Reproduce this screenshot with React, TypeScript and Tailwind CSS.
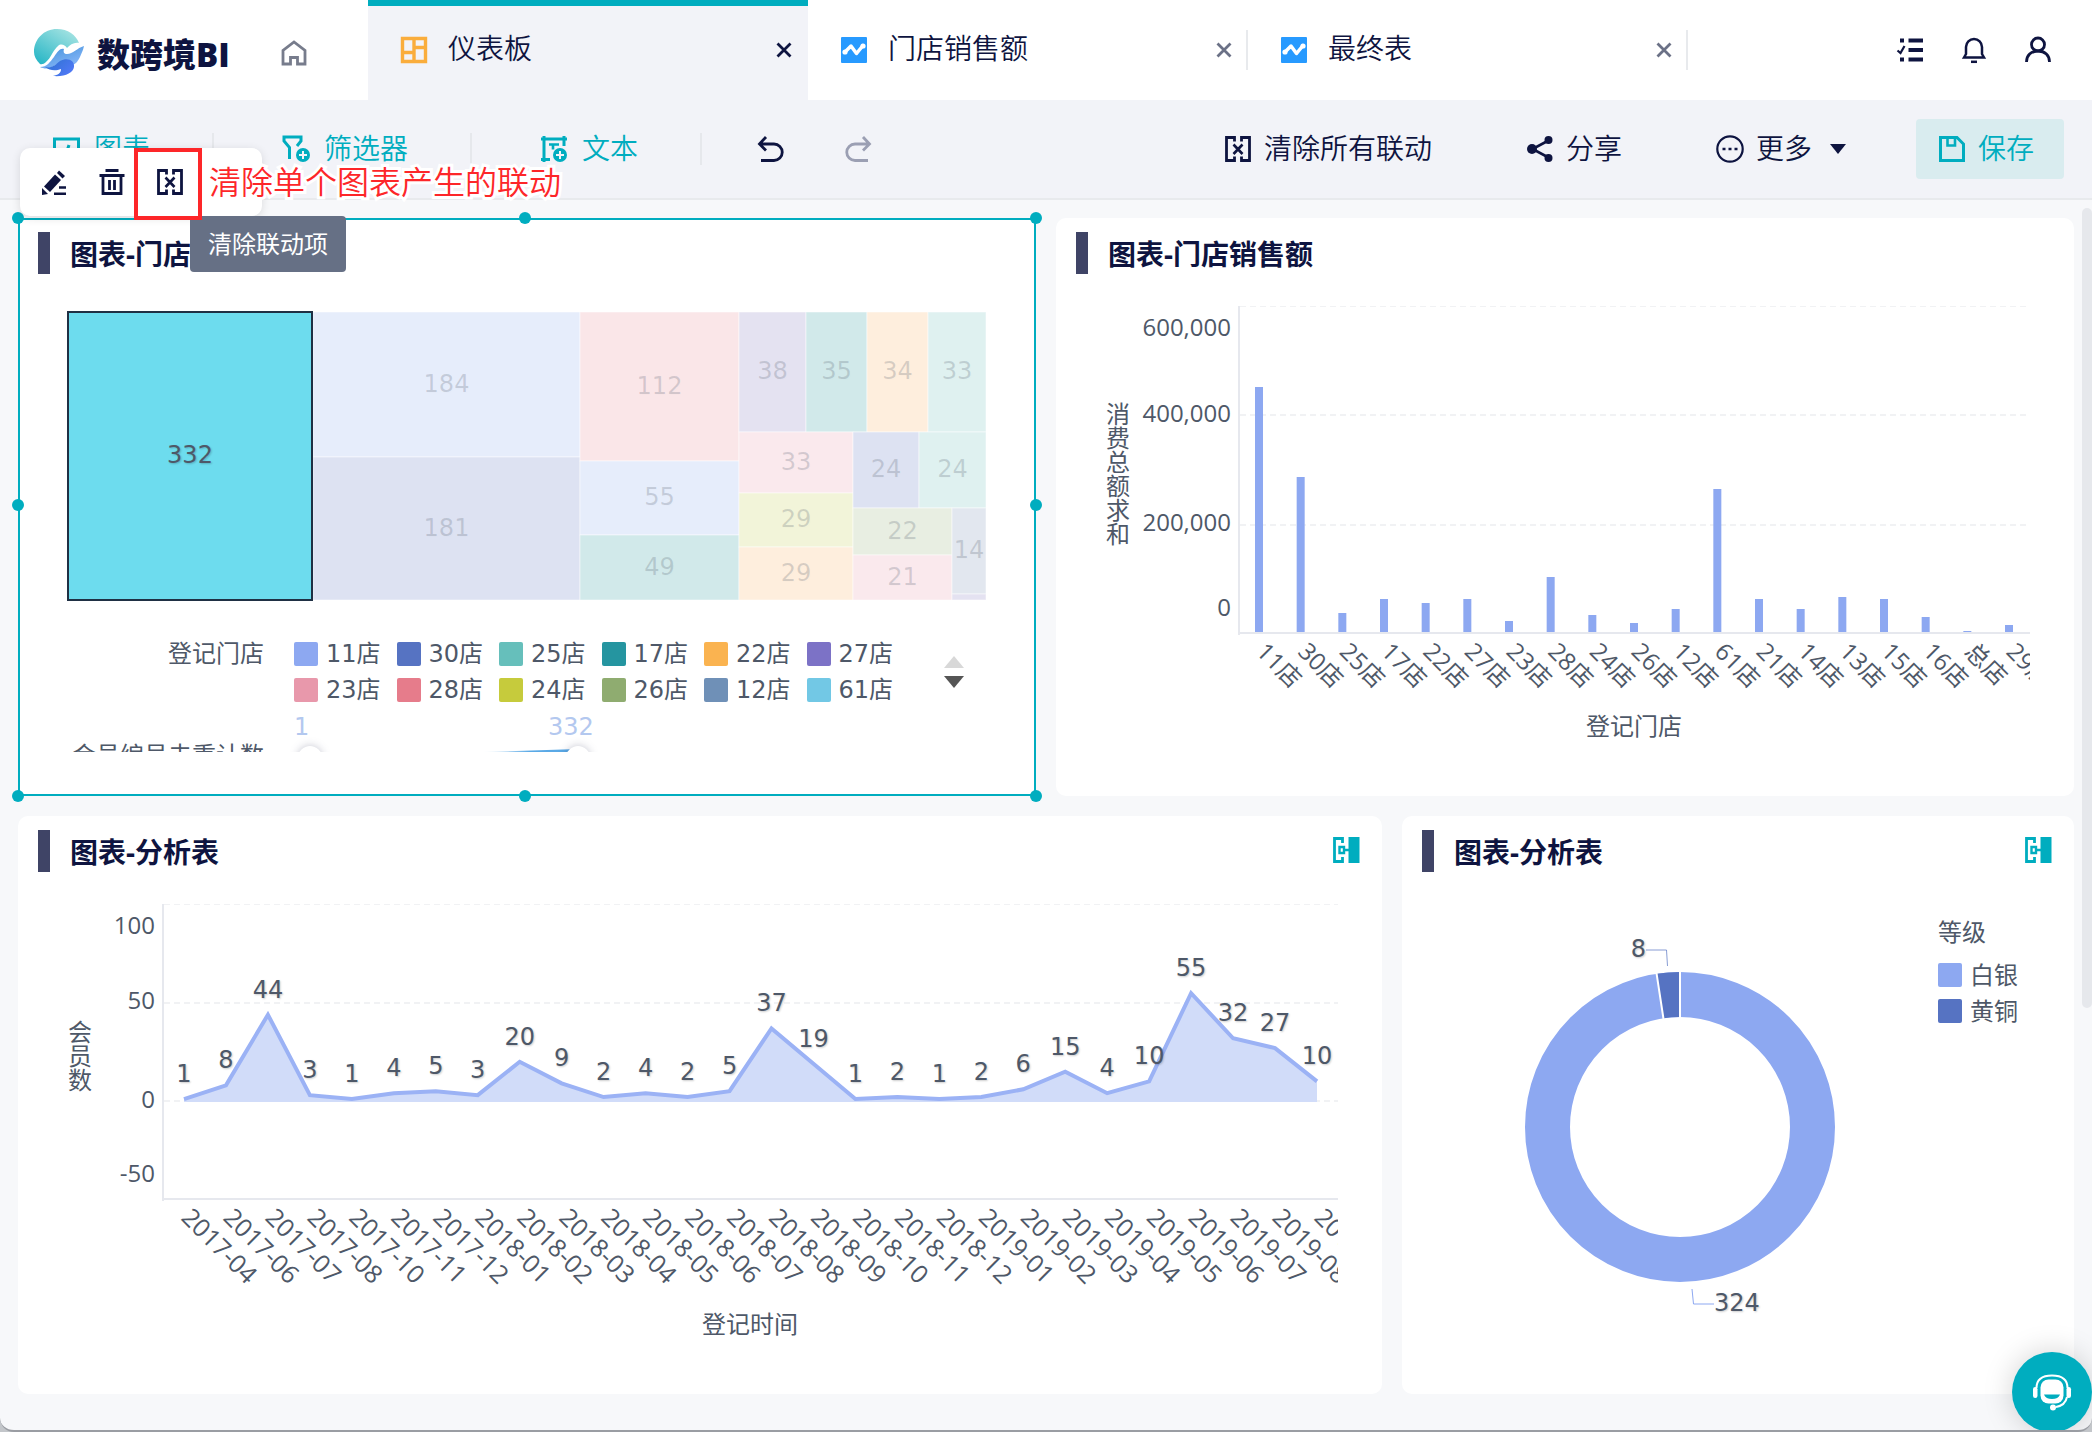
import React from 'react';

const NAVY = '#0e1440';
const TEAL = '#00adbf';
const INK = '#4e5868';

/* ---------- Icons ---------- */

interface IconProps {
  className?: string;
}

const Icon: React.FC<IconProps & { children: React.ReactNode }> = ({ className = 'size-7', children }) => (
  <svg className={`shrink-0 ${className}`} viewBox="0 0 28 28" fill="none" stroke="currentColor" strokeWidth={3} aria-hidden="true">
    {children}
  </svg>
);

const HomeIcon = () => (
  <Icon>
    <path d="M3 25V11.500L14 3l11 8.500V25h-7.500v-6.500h-7V25z" strokeWidth={2.800} />
  </Icon>
);

const DashboardIcon = () => (
  <Icon className="size-7 text-[#faad3c]">
    <path d="M2.500 2.500h23v23h-23zM14 2.500v23M2.500 16.500H14M14 11.500h11.500" strokeWidth={3.400} />
  </Icon>
);

const DatasetIcon = () => (
  <Icon className="size-7">
    <rect x="1" y="1" width="26" height="26" rx="1" fill="#279aff" stroke="none" />
    <path d="M5 16l6-6 5.500 7.500 6.500-8" stroke="#fff" strokeWidth={3.500} strokeLinecap="round" strokeLinejoin="round" />
    <circle cx="5" cy="16" r="2.600" fill="#fff" stroke="none" />
    <circle cx="23" cy="10" r="2.600" fill="#fff" stroke="none" />
  </Icon>
);

const CloseIcon = () => (
  <svg className="size-4" viewBox="0 0 16 16" fill="none" stroke="currentColor" strokeWidth={2.800} aria-hidden="true">
    <path d="M1.500 1.500l13 13M14.500 1.500l-13 13" />
  </svg>
);

const TaskIcon = () => (
  <Icon>
    <path d="M12.500 4.500H27M12.500 14H27M12.500 23.500H27M4 4.500h4M4 23.500h4" strokeWidth={3.800} />
    <path d="M1.500 14.500l3 2.500 4-7" strokeWidth={2.200} />
  </Icon>
);

const BellIcon = () => (
  <Icon>
    <path d="M4 21.500l2-3.500v-7a8 8 0 0 1 16 0v7l2 3.500z" strokeWidth={2.500} />
    <path d="M11 25.800h6" strokeWidth={2.500} />
  </Icon>
);

const UserIcon = () => (
  <Icon>
    <circle cx="14" cy="8.500" r="6.500" strokeWidth={2.800} />
    <path d="M2.500 26c0-6.500 4.500-11 11.500-11s11.500 4.500 11.500 11" strokeWidth={2.800} />
  </Icon>
);

const ChartIcon = () => (
  <Icon>
    <path d="M2.500 4h24v20h-24zM9 19v-6M14 19l3-9M21 19v-6" />
  </Icon>
);

const FilterIcon = () => (
  <Icon>
    <path d="M7.500 24V12.500L2 6V2h17v4l-4 5" />
    <circle cx="21" cy="20" r="7" fill="currentColor" stroke="none" />
    <path d="M21 16v8M17 20h8" stroke="#f2f3f8" strokeWidth={2} />
  </Icon>
);

const TextIcon = () => (
  <Icon>
    <path d="M4 1v26M24 1v10M1 4h26M1 24.500h9" strokeWidth={3} />
    <path d="M9 9.500h10M13 9.500v5" strokeWidth={2.600} />
    <circle cx="20" cy="20" r="7" fill="currentColor" stroke="none" />
    <path d="M20 16v8M16 20h8" stroke="#f2f3f8" strokeWidth={2} />
  </Icon>
);

const UndoIcon = () => (
  <Icon>
    <path d="M10 2L3.500 9l6.500 6.500M4 9h14a8 8 0 0 1 0 16.500H5" strokeWidth={2.800} />
  </Icon>
);

const RedoIcon = () => (
  <Icon>
    <path d="M18 2l6.500 7-6.500 6.500M24 9H10a8 8 0 0 0 0 16.500h13" strokeWidth={2.800} />
  </Icon>
);

const UnlinkIcon = () => (
  <Icon>
    <path d="M10.500 6.500V2.500h-8v23h8v-4M17.500 6.500V2.500h8v23h-8v-4" strokeWidth={2.800} />
    <path d="M9.500 9.500l9 9.500M18.500 9.500l-9 9.500" strokeWidth={2.600} />
  </Icon>
);

const ShareIcon = () => (
  <Icon>
    <path d="M22.500 5.500L6.500 14l16 8.500" strokeWidth={2.600} />
    <circle cx="6" cy="14" r="5" fill="currentColor" stroke="none" />
    <circle cx="22.500" cy="5" r="4" fill="currentColor" stroke="none" />
    <circle cx="22.500" cy="23" r="4" fill="currentColor" stroke="none" />
  </Icon>
);

const MoreIcon = () => (
  <Icon>
    <circle cx="14" cy="14" r="12.700" strokeWidth={2.200} />
    <path d="M6.500 14h3M12.500 14h3M18.500 14h3" strokeWidth={2.600} />
  </Icon>
);

const SaveIcon = () => (
  <Icon>
    <path d="M2.500 2.500H19l6.500 6.500v16.500h-23z" />
    <path d="M9.500 3v7.500h7.500V3" strokeWidth={2.600} />
  </Icon>
);

const EditIcon = () => (
  <Icon>
    <path d="M4 18.500L15 6.500l6 5.500-11 12z" fill="currentColor" stroke="none" />
    <path d="M17 5l2-2.500 6 5.500-2.500 2.500z" fill="currentColor" stroke="none" />
    <path d="M2 27v-7l6 6z" fill="currentColor" stroke="none" />
    <path d="M14 25.800h12M19 19.500h7" strokeWidth={2.400} />
  </Icon>
);

const TrashIcon = () => (
  <Icon>
    <path d="M7.500 2.500h13M1.500 7.500h25" strokeWidth={2.800} />
    <path d="M5 8v17.500h18V8M11.500 12v10M16.500 12v10" strokeWidth={2.800} />
  </Icon>
);

const LinkedIcon = () => (
  <Icon>
    <path d="M10.500 7V2.500h-8v23h8V21" strokeWidth={2.800} />
    <path d="M7.500 11h4.500v6H7.500zM12.500 14H18" strokeWidth={2.400} />
    <rect x="16.500" y="1" width="11" height="26" fill="currentColor" stroke="none" />
  </Icon>
);

const Logo = () => (
  <svg className="h-[50px] w-[52px] shrink-0" viewBox="0 0 52 50" aria-hidden="true">
    <defs>
      <linearGradient id="logo-sky" x1="0" y1="1" x2="0.800" y2="0">
        <stop offset="0" stopColor="#1fb3c4" />
        <stop offset="1" stopColor="#a5e3e2" />
      </linearGradient>
      <linearGradient id="logo-wave" x1="0" y1="0" x2="0.700" y2="1">
        <stop offset="0" stopColor="#3d8fd8" />
        <stop offset="1" stopColor="#8ab8fa" />
      </linearGradient>
      <linearGradient id="logo-deep" x1="0" y1="0" x2="1" y2="0.600">
        <stop offset="0" stopColor="#2a72cd" />
        <stop offset="1" stopColor="#4f78f5" />
      </linearGradient>
    </defs>
    {/* sky disc with a white crest cut along its lower edge */}
    <path d="M7 36C3 32 1 28 1 24 1 11 11 1 24 1c11 0 19 6 22 14-5-1-9 2-12 5-2-3-6-5-9-2-5 4-7 12-12 16-2 2-4 2.500-6 2z" fill="url(#logo-sky)" />
    <path d="M7 39c7 0 10-5 14-10 4-6 6-9 10-8-1 3 0 5 3 5 6 0 10-6 17-8-1 5-3 8-4 11-2 4-4 7-8 8-4-4-8-6-12-3-6 4-12 9-20 5z" fill="url(#logo-wave)" />
    <path d="M12 39c7 2 11-3 15-6 7-4 15-1 14 6-1 6-9 10-21 9 5-1 8-3 8-7-5 2-11 2-16-2z" fill="url(#logo-deep)" />
  </svg>
);

/* ---------- Header ---------- */

interface TabItem {
  title: string;
  kind: 'dashboard' | 'dataset';
  active?: boolean;
}

const TABS: TabItem[] = [
  { title: '仪表板', kind: 'dashboard', active: true },
  { title: '门店销售额', kind: 'dataset' },
  { title: '最终表', kind: 'dataset' },
];

const Tab: React.FC<{ tab: TabItem }> = ({ tab }) => (
  <div
    className={`flex w-[440px] items-center border-t-[6px] pb-1.5 pl-8 ${
      tab.active ? 'border-[#00adbf] bg-[#f2f3f8] pr-4' : 'border-transparent'
    }`}
  >
    <button className="flex flex-1 items-center gap-5 text-left">
      {tab.kind === 'dashboard' ? <DashboardIcon /> : <DatasetIcon />}
      <span className="pb-1">{tab.title}</span>
    </button>
    <button aria-label={`关闭${tab.title}`} className={tab.active ? '' : 'mr-3.5 text-[#6b7186]'}>
      <CloseIcon />
    </button>
    {!tab.active && <span className="h-10 w-0.5 bg-[#e8eaed]" />}
  </div>
);

const Header = () => (
  <header className="flex h-[100px] bg-white">
    <div className="flex w-[368px] items-center pt-1.5 pl-[33px]">
      <Logo />
      <span className="ml-3 pt-1 text-[33px] leading-10 font-black">数跨境BI</span>
      <a href="#home" aria-label="首页" className="ml-[50px] text-[#777c8c]">
        <HomeIcon />
      </a>
    </div>
    {TABS.map((tab) => (
      <Tab key={tab.title} tab={tab} />
    ))}
    <div className="ml-auto flex items-center gap-9 pr-10">
      <button aria-label="任务"><TaskIcon /></button>
      <button aria-label="通知"><BellIcon /></button>
      <button aria-label="用户"><UserIcon /></button>
    </div>
  </header>
);

/* ---------- Toolbar ---------- */

const ToolDivider = () => <span className="mr-[68px] ml-[62px] h-8 w-0.5 bg-[#e6e8ec]" />;

const ToolButton: React.FC<{ icon: React.ReactNode; label: string; className?: string }> = ({ icon, label, className = 'gap-3' }) => (
  <button className={`flex items-center ${className}`}>
    {icon}
    <span className="pb-0.5">{label}</span>
  </button>
);

const Toolbar = () => (
  <div className="flex h-[100px] items-center border-b-2 border-[#e8eaed] bg-[#f2f3f8] pr-7 pl-[52px]">
    <ToolButton icon={<ChartIcon />} label="图表" className="gap-3.5 text-[#00adbf]" />
    <ToolDivider />
    <ToolButton icon={<FilterIcon />} label="筛选器" className="gap-3.5 text-[#00adbf]" />
    <ToolDivider />
    <ToolButton icon={<TextIcon />} label="文本" className="gap-3.5 text-[#00adbf]" />
    <ToolDivider />
    <div className="-ml-3.5 flex gap-[61px]">
      <button aria-label="撤销"><UndoIcon /></button>
      <button aria-label="重做" className="text-[#9b9fb3]" disabled><RedoIcon /></button>
    </div>

    <div className="ml-auto flex items-center gap-[94px]">
      <ToolButton icon={<UnlinkIcon />} label="清除所有联动" />
      <ToolButton icon={<ShareIcon />} label="分享" />
      <button className="flex items-center gap-3">
        <MoreIcon />
        <span className="pb-0.5">更多</span>
        <svg className="ml-1.5 h-2.5 w-4" viewBox="0 0 16 10" fill="currentColor" aria-hidden="true">
          <path d="M0 0h16L8 10z" />
        </svg>
      </button>
    </div>
    <ToolButton
      icon={<SaveIcon />}
      label="保存"
      className="ml-[70px] h-[60px] w-[148px] gap-3 rounded bg-[#d9ecef] pl-[22px] text-[#00adbf]"
    />
  </div>
);

/* ---------- Cards ---------- */

interface CardProps {
  title: string;
  linked?: boolean;
  className?: string;
  children: React.ReactNode;
}

const Card: React.FC<CardProps> = ({ title, linked, className = '', children }) => (
  <section className={`flex min-h-[578px] flex-col bg-white font-normal ${className}`}>
    <div className="flex h-14 items-center pt-3.5 pr-[22px] pl-5">
      <span className="h-[42px] w-3 bg-[#3f4466]" />
      <h2 className="ml-5 pt-0.5 text-[28px] leading-10 font-bold">{title}</h2>
      {linked && (
        <button aria-label="联动" className="ml-auto pb-0.5 text-[#00adbf]">
          <LinkedIcon />
        </button>
      )}
    </div>
    {children}
  </section>
);

const DIGITS = "font-['DejaVu_Sans','Noto_Sans_CJK_SC',sans-serif] text-[24px]";
const LABEL = "font-['Open_Sans','Noto_Sans_CJK_SC',sans-serif] text-[24px]";

/* x, y, width, height, value, fill */
type Tile = [number, number, number, number, string, string];

const TILES: Tile[] = [
  [247, 2, 267, 145, '184', '#e6edfb'],
  [247, 147, 267, 143, '181', '#dde2f2'],
  [514, 2, 159, 149, '112', '#fae6e8'],
  [514, 151, 159, 74, '55', '#e6edfb'],
  [514, 225, 159, 65, '49', '#d1e9ea'],
  [673, 2, 67, 120, '38', '#e4e2f1'],
  [740, 2, 61, 120, '35', '#d1e9ea'],
  [801, 2, 61, 120, '34', '#feeedd'],
  [862, 2, 58, 120, '33', '#dff1f0'],
  [673, 122, 114, 61, '33', '#fae9ed'],
  [673, 183, 114, 54, '29', '#f2f4d9'],
  [673, 237, 114, 53, '29', '#feeedd'],
  [787, 122, 66, 76, '24', '#dde2f2'],
  [853, 122, 67, 76, '24', '#dff1f0'],
  [787, 198, 99, 47, '22', '#e8eee2'],
  [787, 245, 99, 45, '21', '#fae9ed'],
  [886, 198, 34, 86, '14', '#e2e7ef'],
  [886, 284, 34, 6, '', '#e4e2f1'],
];

const Treemap = () => (
  <svg className={`mt-9 w-full ${DIGITS}`} viewBox="0 0 922 292" textAnchor="middle" role="img" aria-label="门店矩形树图">
    {TILES.map(([x, y, w, h, value, fill], idx) => (
      <g key={idx}>
        <rect x={x} y={y} width={w} height={h} fill={fill} stroke="#fff" strokeOpacity={0.5} />
        {value && (
          <text className="[text-shadow:1px_1px_2px_#0000000f]" x={x + w / 2} y={y + h / 2 + 7} fill={INK} fillOpacity={0.22}>{value}</text>
        )}
      </g>
    ))}
    <rect x="2" y="2" width="244" height="288" fill="#6ddcee" stroke="#1f3044" strokeWidth={2} />
    <text className="[text-shadow:1px_1px_2px_#00000033]" x="124" y="153" fill={INK}>332</text>
  </svg>
);

const STORES = [
  { name: '11店', color: 'bg-[#8da8f1]' },
  { name: '30店', color: 'bg-[#5673c2]' },
  { name: '25店', color: 'bg-[#66bfbb]' },
  { name: '17店', color: 'bg-[#2595a0]' },
  { name: '22店', color: 'bg-[#fab350]' },
  { name: '27店', color: 'bg-[#7c72c6]' },
  { name: '23店', color: 'bg-[#e898ab]' },
  { name: '28店', color: 'bg-[#e67c8b]' },
  { name: '24店', color: 'bg-[#c6cb3c]' },
  { name: '26店', color: 'bg-[#8fac70]' },
  { name: '12店', color: 'bg-[#6f90b7]' },
  { name: '61店', color: 'bg-[#72c8e5]' },
];

const TreemapLegend = () => (
  <div className={`mt-[34px] h-[116px] overflow-hidden text-[#4e5868] ${DIGITS}`}>
    <div className="flex">
      <span className="w-[198px] text-right leading-9">登记门店</span>
      <ul className="ml-[30px] grid w-[615px] grid-cols-6">
        {STORES.map((store) => (
          <li key={store.name} className="flex h-9 items-center gap-2">
            <span className={`size-6 rounded-xs ${store.color}`} />
            {store.name}
          </li>
        ))}
      </ul>
      <div className="ml-[35px] flex flex-col justify-center gap-2">
        <button aria-label="上一页" className="text-[#d8d8d8]">
          <svg className="h-3 w-5" viewBox="0 0 20 12" fill="currentColor"><path d="M0 12L10 0l10 12z" /></svg>
        </button>
        <button aria-label="下一页" className="text-[#555]">
          <svg className="h-3 w-5" viewBox="0 0 20 12" fill="currentColor"><path d="M0 0h20L10 12z" /></svg>
        </button>
      </div>
    </div>
    <div className="flex h-9 items-center pt-0.5 pl-7 text-[#b3c8ef]">
      <span className="ml-[200px] w-[254px]">1</span>
      <span>332</span>
    </div>
    <div className="flex">
      <span className="w-[198px] shrink-0 text-right leading-6">会员编号去重计数</span>
      <svg className="ml-7 h-6 w-[310px] overflow-visible" viewBox="0 0 310 24" aria-hidden="true">
        <defs>
          <linearGradient id="range-track">
            <stop offset="0" stopColor="#5aa9e6" stopOpacity="0" />
            <stop offset="0.500" stopColor="#5aa9e6" />
          </linearGradient>
        </defs>
        <path d="M190 8L286 5v12z" fill="url(#range-track)" />
        <circle className="drop-shadow-[0_0_4px_#0e144040]" cx="18" cy="14" r="12" fill="#fff" />
        <circle className="drop-shadow-[0_0_4px_#0e144040]" cx="286" cy="14" r="12" fill="#fff" />
      </svg>
    </div>
  </div>
);

/* Handles sit on the corners and edge middles of the selected card */
const HANDLES = [
  '-left-2 -top-2',
  'left-1/2 -ml-2 -top-2',
  '-right-2 -top-2',
  '-left-2 top-1/2 -mt-2',
  '-right-2 top-1/2 -mt-2',
  '-left-2 -bottom-2',
  'left-1/2 -ml-2 -bottom-2',
  '-right-2 -bottom-2',
];

const SelectionOverlay = () => (
  <>
    <div className="pointer-events-none absolute inset-0 border-2 border-[#00adbf]">
      {HANDLES.map((pos) => (
        <span key={pos} className={`absolute size-3 rounded-full bg-[#00adbf] ${pos}`} />
      ))}
    </div>
    <div className="absolute -top-[70px] left-0.5 z-10 flex h-[68px] w-[242px] items-center rounded-[10px] bg-white pl-5 shadow-[0_2px_10px_#0000001f]">
      <button aria-label="编辑"><EditIcon /></button>
      <button aria-label="删除" className="ml-[30px]"><TrashIcon /></button>
      <button aria-label="清除联动项" className="ml-[30px]"><UnlinkIcon /></button>
    </div>
    <div className="absolute -top-[2px] left-[172px] z-20 flex h-14 items-center rounded bg-[#667085] px-[18px] text-[24px] whitespace-nowrap text-white">
      清除联动项
    </div>
    <div className="absolute -top-[70px] left-[116px] z-30 h-[72px] w-[68px] border-4 border-[#fd2629]" />
    <p className="absolute -top-[60px] left-[191px] z-20 text-[32px] leading-[48px] font-[350] whitespace-nowrap text-[#fd2629] [paint-order:stroke_fill] [-webkit-text-stroke:6px_#fff]">
      清除单个图表产生的联动
    </p>
  </>
);

const VerticalTitle: React.FC<{ text: string; x: number; y: number }> = ({ text, x, y }) => (
  <text className="[writing-mode:vertical-rl]" x={x} y={y}>{text}</text>
);

/* label, top of the bar */
const BARS: [string, number][] = [
  ['11店', 113], ['30店', 203], ['25店', 339], ['17店', 325], ['22店', 329],
  ['27店', 325], ['23店', 347], ['28店', 303], ['24店', 341], ['26店', 349],
  ['12店', 335], ['61店', 215], ['21店', 325], ['14店', 335], ['13店', 323],
  ['15店', 325], ['16店', 343], ['总店', 357], ['29店', 351],
];

const BarChart = () => {
  const step = 750 / 18;

  return (
    <svg className={`w-full ${LABEL}`} viewBox="0 0 1018 522" fill={INK} role="img" aria-label="门店销售额柱状图">
      <clipPath id="bar-clip"><rect width="974" height="522" /></clipPath>
      <g stroke="#f1f2f4" strokeWidth={2} strokeDasharray="6 4">
        <path d="M184 32.500H974" strokeWidth={1} />
        <path d="M184 141H974M184 251H974" />
      </g>
      <path d="M183 32V361M182 359H974" stroke="#e6e8ee" strokeWidth={2} />
      <g textAnchor="end">
        <text x="175" y="62">600,000</text>
        <text x="175" y="148">400,000</text>
        <text x="175" y="257">200,000</text>
        <text x="175" y="342">0</text>
      </g>
      <VerticalTitle text="消费总额求和" x={61} y={128} />
      <g clipPath="url(#bar-clip)">
        {BARS.map(([label, top], idx) => {
          const x = 199 + idx * step;
          return (
            <g key={label}>
              <rect x={x} y={top} width={8} height={358 - top} fill="#8da8f1" />
              <text transform={`translate(${x} 379) rotate(45)`}>{label}</text>
            </g>
          );
        })}
      </g>
      <text x="578" y="461" textAnchor="middle">登记门店</text>
    </svg>
  );
};

const MONTHS: [string, number][] = [
  ['2017-04', 1], ['2017-06', 8], ['2017-07', 44], ['2017-08', 3], ['2017-10', 1],
  ['2017-11', 4], ['2017-12', 5], ['2018-01', 3], ['2018-02', 20], ['2018-03', 9],
  ['2018-04', 2], ['2018-05', 4], ['2018-06', 2], ['2018-07', 5], ['2018-08', 37],
  ['2018-09', 19], ['2018-10', 1], ['2018-11', 2], ['2018-12', 1], ['2019-01', 2],
  ['2019-02', 6], ['2019-03', 15], ['2019-04', 4], ['2019-05', 10], ['2019-06', 55],
  ['2019-07', 32], ['2019-08', 27], ['2019-09', 10],
];

const AreaChart = () => {
  const step = 1133 / 27;
  const points = MONTHS.map(([month, value], idx) => ({ month, value, x: 166 + idx * step, y: 229 - value * 1.96 }));
  const line = points.map((p) => `${p.x},${p.y}`).join(' ');

  return (
    <svg className={`w-full ${LABEL}`} viewBox="0 0 1364 522" fill={INK} role="img" aria-label="会员数面积图">
      <clipPath id="area-clip"><rect width="1320" height="522" /></clipPath>
      <g stroke="#f1f2f4" strokeWidth={2} strokeDasharray="6 4">
        <path d="M146 32.500H1320" strokeWidth={1} />
        <path d="M146 131H1320M146 229H1320" />
      </g>
      <path d="M145 32V329M144 327H1320" stroke="#e6e8ee" strokeWidth={2} />
      <g textAnchor="end">
        <text x="137" y="62">100</text>
        <text x="137" y="137">50</text>
        <text x="137" y="236">0</text>
        <text x="137" y="310">-50</text>
      </g>
      <VerticalTitle text="会员数" x={61} y={148} />
      <polygon points={`166,230 ${line} 1299,230`} fill="#d1dcf9" />
      <polyline points={line} fill="none" stroke="#9bb2f5" strokeWidth={4} />
      <g className={`[text-shadow:1px_1px_2px_#00000033] ${DIGITS}`} textAnchor="middle">
        {points.map((p) => (
          <text key={p.month} x={p.x} y={p.y - 17}>{p.value}</text>
        ))}
      </g>
      <g className="text-[25px]" clipPath="url(#area-clip)">
        {points.map((p) => (
          <text key={p.month} transform={`translate(${p.x - 4} 347) rotate(45)`}>{p.month}</text>
        ))}
      </g>
      <text x="732" y="461" textAnchor="middle">登记时间</text>
    </svg>
  );
};

const DonutChart = () => {
  const angle = (8 / 332) * Math.PI * 2;
  const at = (radius: number) => `${278 - radius * Math.sin(angle)} ${255 - radius * Math.cos(angle)}`;

  return (
    <svg className={`min-w-0 flex-1 ${DIGITS}`} viewBox="0 0 536 522" fill={INK} role="img" aria-label="等级环形图">
      <circle cx="278" cy="255" r="132.500" fill="none" stroke="#8da8f1" strokeWidth={45} />
      <path
        d={`M278 100A155 155 0 0 0 ${at(155)}L${at(110)}A110 110 0 0 1 278 145z`}
        fill="#5673c2"
      />
      <path d={`M278 98V147M${at(157)}L${at(108)}`} stroke="#fff" strokeWidth={2} />
      <path d="M265.500 94L264.500 78H244" fill="none" stroke="#5673c2" strokeOpacity={0.700} />
      <path d="M290 417L291.500 432H312" fill="none" stroke="#8da8f1" />
      <g className="[text-shadow:1px_1px_2px_#00000033]">
        <text x="244" y="85" textAnchor="end">8</text>
        <text x="312" y="439">324</text>
      </g>
    </svg>
  );
};

const DonutLegend = () => (
  <div className={`w-[136px] pt-[42px] leading-9 text-[#4e5868] ${LABEL}`}>
    <p className="mb-[7px]">等级</p>
    <ul>
      <li className="flex items-center gap-2"><span className="size-6 rounded-xs bg-[#8da8f1]" />白银</li>
      <li className="flex items-center gap-2"><span className="size-6 rounded-xs bg-[#5673c2]" />黄铜</li>
    </ul>
  </div>
);

const ServiceButton = () => (
  <button
    aria-label="在线客服"
    className="absolute right-0 -bottom-0.5 z-40 flex size-20 items-center justify-center rounded-full bg-[#00adbf] text-white shadow-[0_0_30px_#0000002e]"
  >
    <svg className="size-10" viewBox="0 0 40 40" fill="none" stroke="currentColor" aria-hidden="true">
      <path d="M4.500 16C4.500 8 10 3.500 20 3.500S35.500 8 35.500 16M35 25c-1 5-5 9-11 10" strokeWidth={2} />
      <rect x="8.500" y="7.500" width="23" height="24" rx="8" fill="currentColor" stroke="none" />
      <path d="M12 22.500h16c-1 3-4 4.500-8 4.500s-7-1.500-8-4.500z" fill={TEAL} stroke="none" />
      <rect x="1" y="15" width="4.500" height="11" rx="2.200" fill="currentColor" stroke="none" />
      <rect x="34.500" y="15" width="4.500" height="11" rx="2.200" fill="currentColor" stroke="none" />
      <circle cx="21" cy="35.500" r="3" fill="currentColor" stroke="none" />
    </svg>
  </button>
);

export default function App() {
  return (
    <div className="min-h-screen bg-[#c3c6ca] font-['Open_Sans','Noto_Sans_CJK_SC',sans-serif]">
      <div
        className="relative flex min-h-screen flex-col overflow-hidden rounded-b-[14px] border-b-2 border-[#9a9da3] bg-[#f7f8fa] text-[28px] leading-10 font-[350]"
        style={{ color: NAVY }}
      >
        <Header />
        <Toolbar />

        <main className="relative grid flex-1 grid-cols-6 content-start gap-5 px-[18px] pt-[18px] pb-9">
          <Card title="图表-门店销售额" className="relative col-span-3">
            <div className="px-12">
              <Treemap />
              <TreemapLegend />
            </div>
            <SelectionOverlay />
          </Card>
          <Card title="图表-门店销售额" className="col-span-3 rounded-[10px]">
            <BarChart />
          </Card>
          <Card title="图表-分析表" linked className="col-span-4 rounded-[10px]">
            <AreaChart />
          </Card>
          <Card title="图表-分析表" linked className="col-span-2 rounded-[10px]">
            <div className="flex items-start">
              <DonutChart />
              <DonutLegend />
            </div>
          </Card>
          <span className="absolute top-2 right-0 h-[800px] w-2.5 rounded-full bg-[#e6e8ec]" />
        </main>

        <ServiceButton />
      </div>
    </div>
  );
}
